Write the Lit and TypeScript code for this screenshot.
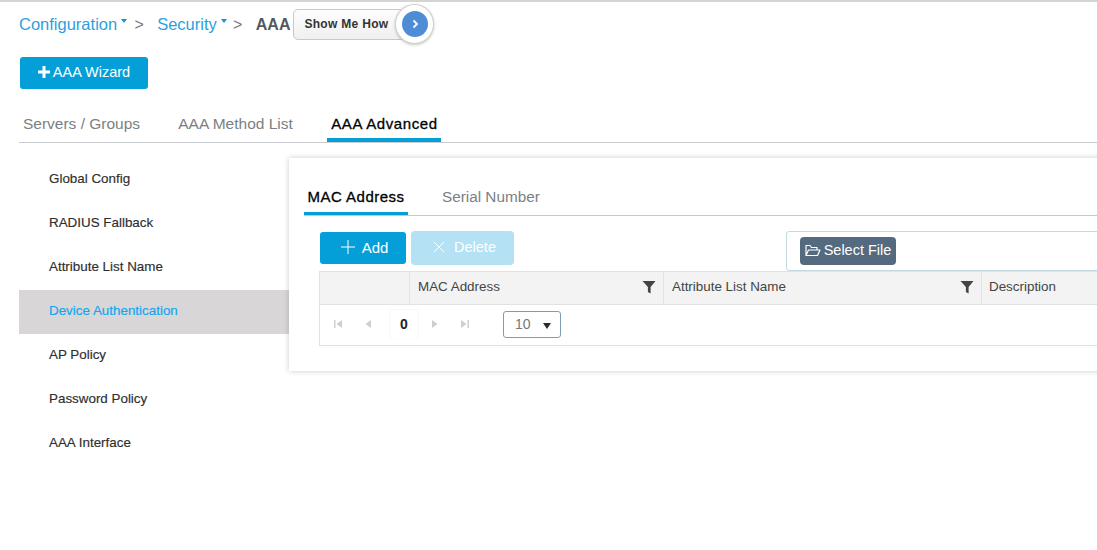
import { LitElement, html, css, svg } from "lit";
import { customElement } from "lit/decorators.js";

const filter = svg`<svg class="filter" width="14" height="14" viewBox="0 0 14 14"><path d="M0.5 1h13L8.6 7v6.5L5.9 12V7z" fill="#444"/></svg>`;
const pg = (d: string) => html`<svg class="pg" width="12" height="12" viewBox="0 0 12 12"><path d=${d} fill="#cfcfcf"/></svg>`;

@customElement("app-root")
export class AppRoot extends LitElement {
  static styles = css`
    :host { display: block; width: 1097px; height: 550px; overflow: hidden; background: #fff; box-sizing: border-box; border-top: 2px solid #d4d4d4; font-family: "Liberation Sans", Arial, sans-serif; color: #333; }
    * { box-sizing: border-box; }
    .crumbs { display: flex; align-items: center; height: 44px; padding-left: 19px; font-size: 16.5px; }
    .link { color: #2c9fe0; margin-top: 1px; }
    .caret { width: 0; height: 0; border: 3.5px solid transparent; border-top: 4px solid #1b8fd0; border-bottom: 0; margin: 0 0 6px 4px; }
    .sep { color: #777; width: 30px; padding-right: 6px; text-align: center; font-size: 16px; margin-top: 1px; }
    .sep.second { width: 26px; padding-right: 4px; margin-right: 3px; }
    .aaa { font-weight: 700; color: #55595e; font-size: 16px; margin-top: 1px; }
    .how { position: relative; margin-left: 3px; width: 112px; height: 31px; border: 1px solid #c8c8c8; border-radius: 5px; background: linear-gradient(#fdfdfd, #f0f0f0); font-size: 12px; font-weight: 700; color: #333; letter-spacing: 0.3px; display: flex; align-items: center; padding-left: 10px; }
    .circle { position: absolute; right: -30px; top: -6px; width: 39px; height: 40px; border-radius: 50%; background: #fff; border: 1px solid #d0d0d0; box-shadow: 0 1px 3px rgba(0,0,0,.22); display: flex; align-items: center; justify-content: center; }
    .dot { width: 26px; height: 26px; border-radius: 50%; background: #4f8cd6; display: flex; align-items: center; justify-content: center; }
    .wizard-row { padding: 11px 0 0 20px; }
    .btn { display: inline-flex; align-items: center; justify-content: center; background: #049fd9; color: #fff; border-radius: 3px; font-size: 14px; }
    .wizard { width: 128px; height: 32px; gap: 3px; font-size: 14.5px; padding-bottom: 2px; }
    .tabs { display: flex; margin: 17px 0 0 19px; height: 37px; border-bottom: 1px solid #c9ccd0; font-size: 15.5px; color: #7b7f84; }
    .tab { height: 36px; display: flex; align-items: center; justify-content: center; }
    .tab.active { color: #000; border-bottom: 4px solid #049fd9; padding: 2px 0 0 1px; font-size: 15px; letter-spacing: 0.6px; -webkit-text-stroke: 0.3px #000; }
    .t1 { width: 125px; }
    .t2 { width: 183px; }
    .t3 { width: 114px; }
    .main { display: flex; margin: 15px 0 0 19px; }
    .side { width: 270px; flex: none; font-size: 13.4px; color: #2e2e2e; -webkit-text-stroke: 0.15px currentColor; }
    .item { height: 44px; padding: 13px 0 0 30px; line-height: 15px; }
    .item.on { background: #d8d6d7; color: #10a6f0; }
    .panel { flex: none; width: 900px; height: 213px; box-shadow: 0 0 6px rgba(0,0,0,.2); background: #fff; padding: 26px 0 0 15px; }
    .tabs2 { display: flex; height: 32px; border-bottom: 1px solid #c4c8cc; font-size: 15.3px; color: #7b7f84; }
    .tab2 { display: flex; align-items: center; justify-content: center; height: 31px; padding-bottom: 6px; }
    .tab2.active { color: #000; width: 104px; border-bottom: 3px solid #049fd9; padding-bottom: 3px; font-size: 15px; letter-spacing: 0.5px; -webkit-text-stroke: 0.3px #000; white-space: nowrap; }
    .tab2.sn { margin-left: 34px; }
    .tools { display: flex; align-items: flex-start; height: 55px; padding: 15px 0 0 16px; }
    .add { width: 86px; height: 32px; margin-top: 1px; gap: 7px; font-size: 15px; padding: 0 0 2px 3px; }
    .del { width: 103px; height: 34px; margin-left: 5px; gap: 9px; background: #b4e2f4; border-radius: 4px; font-size: 14.5px; padding: 0 0 3px 4px; }
    .file { margin-left: 272px; width: 400px; height: 40px; border: 1px solid #c5d9e2; border-radius: 3px 0 0 3px; padding: 5px 0 0 13px; }
    .choose { width: 96px; height: 28px; background: #546a7e; color: #fff; border-radius: 4px; gap: 3px; font-size: 14.5px; padding-bottom: 2px; }
    .table { margin-left: 15px; width: 900px; height: 75px; border: 1px solid #e2e2e2; }
    .head { display: grid; grid-template-columns: 89px 254px 318px 1fr; height: 33px; background: #f3f3f3; border-bottom: 1px solid #e2e2e2; font-size: 13.4px; color: #444; }
    .th { display: flex; align-items: center; justify-content: space-between; padding: 0 7px 4px 8px; border-left: 1px solid #e2e2e2; }
    .th:first-child { border-left: 0; }
    .th:last-child { padding-left: 7px; }
    .filter { margin-top: 4px; }
    .pager { display: flex; align-items: center; height: 40px; padding: 0 0 2px 12px; }
    .pg { flex: none; margin-right: 18px; }
    .num { width: 30px; height: 30px; margin: 0 10px 0 -3px; border: 1px solid #f7f7f7; border-bottom-color: #fcfcfc; text-align: center; font-size: 14px; font-weight: 700; color: #222; line-height: 28px; flex: none; }
    .sel { width: 58px; height: 27px; margin-left: 14px; border: 1px solid #7f9db2; border-radius: 3px; display: flex; align-items: center; justify-content: space-between; padding: 0 9px 0 11px; font-size: 14px; color: #777; }
    .arrow { width: 0; height: 0; border: 4px solid transparent; border-top: 6px solid #2b2b2b; border-bottom: 0; margin-top: 3px; }
  `;

  render() {
    const items = ["Global Config", "RADIUS Fallback", "Attribute List Name", "Device Authentication", "AP Policy", "Password Policy", "AAA Interface"];
    return html`
      <div class="crumbs">
        <span class="link">Configuration</span><span class="caret"></span><span class="sep">&gt;</span>
        <span class="link">Security</span><span class="caret"></span><span class="sep second">&gt;</span>
        <span class="aaa">AAA</span>
        <div class="how">Show Me How
          <div class="circle"><div class="dot"><svg width="10" height="10" viewBox="0 0 10 10"><path d="M3.5 1.5 7 5 3.5 8.5" fill="none" stroke="#fff" stroke-width="1.8"/></svg></div></div>
        </div>
      </div>
      <div class="wizard-row"><div class="btn wizard"><svg width="12" height="12" viewBox="0 0 12 12"><path d="M4.5 0h3v4.5H12v3H7.5V12h-3V7.5H0v-3h4.5z" fill="#fff"/></svg>AAA Wizard</div></div>
      <div class="tabs">
        <div class="tab t1">Servers / Groups</div>
        <div class="tab t2">AAA Method List</div>
        <div class="tab t3 active">AAA Advanced</div>
      </div>
      <div class="main">
        <div class="side">${items.map((i, n) => html`<div class="item ${n === 3 ? "on" : ""}">${i}</div>`)}</div>
        <div class="panel">
          <div class="tabs2"><div class="tab2 active">MAC Address</div><div class="tab2 sn">Serial Number</div></div>
          <div class="tools">
            <div class="btn add"><svg width="14" height="14" viewBox="0 0 14 14"><path d="M7 0v14M0 7h14" stroke="#fff" stroke-width="1"/></svg>Add</div>
            <div class="btn del"><svg width="12" height="12" viewBox="0 0 12 12"><path d="M1 1l10 10M11 1 1 11" stroke="#fff" stroke-width="1"/></svg>Delete</div>
            <div class="file"><div class="btn choose"><svg width="16" height="13" viewBox="0 0 16 13"><path d="M1 11.5V1.5h4l1.5 2h5.5v2.5M1 11.5 3.5 6H15l-2.5 5.5z" fill="none" stroke="#fff" stroke-width="1.2" stroke-linejoin="round"/></svg>Select File</div></div>
          </div>
          <div class="table">
            <div class="head">
              <div class="th"></div>
              <div class="th">MAC Address <span>${filter}</span></div>
              <div class="th">Attribute List Name <span>${filter}</span></div>
              <div class="th">Description</div>
            </div>
            <div class="pager">
              ${pg("M2 2h1.5v8H2zM10 2v8L4.5 6z")}
              ${pg("M9 2v8L3.5 6z")}
              <div class="num">0</div>
              ${pg("M3 2v8l5.5-4z")}
              ${pg("M2 2v8l5.5-4zM8.5 2H10v8H8.5z")}
              <div class="sel">10 <span class="arrow"></span></div>
            </div>
          </div>
        </div>
      </div>
    `;
  }
}
